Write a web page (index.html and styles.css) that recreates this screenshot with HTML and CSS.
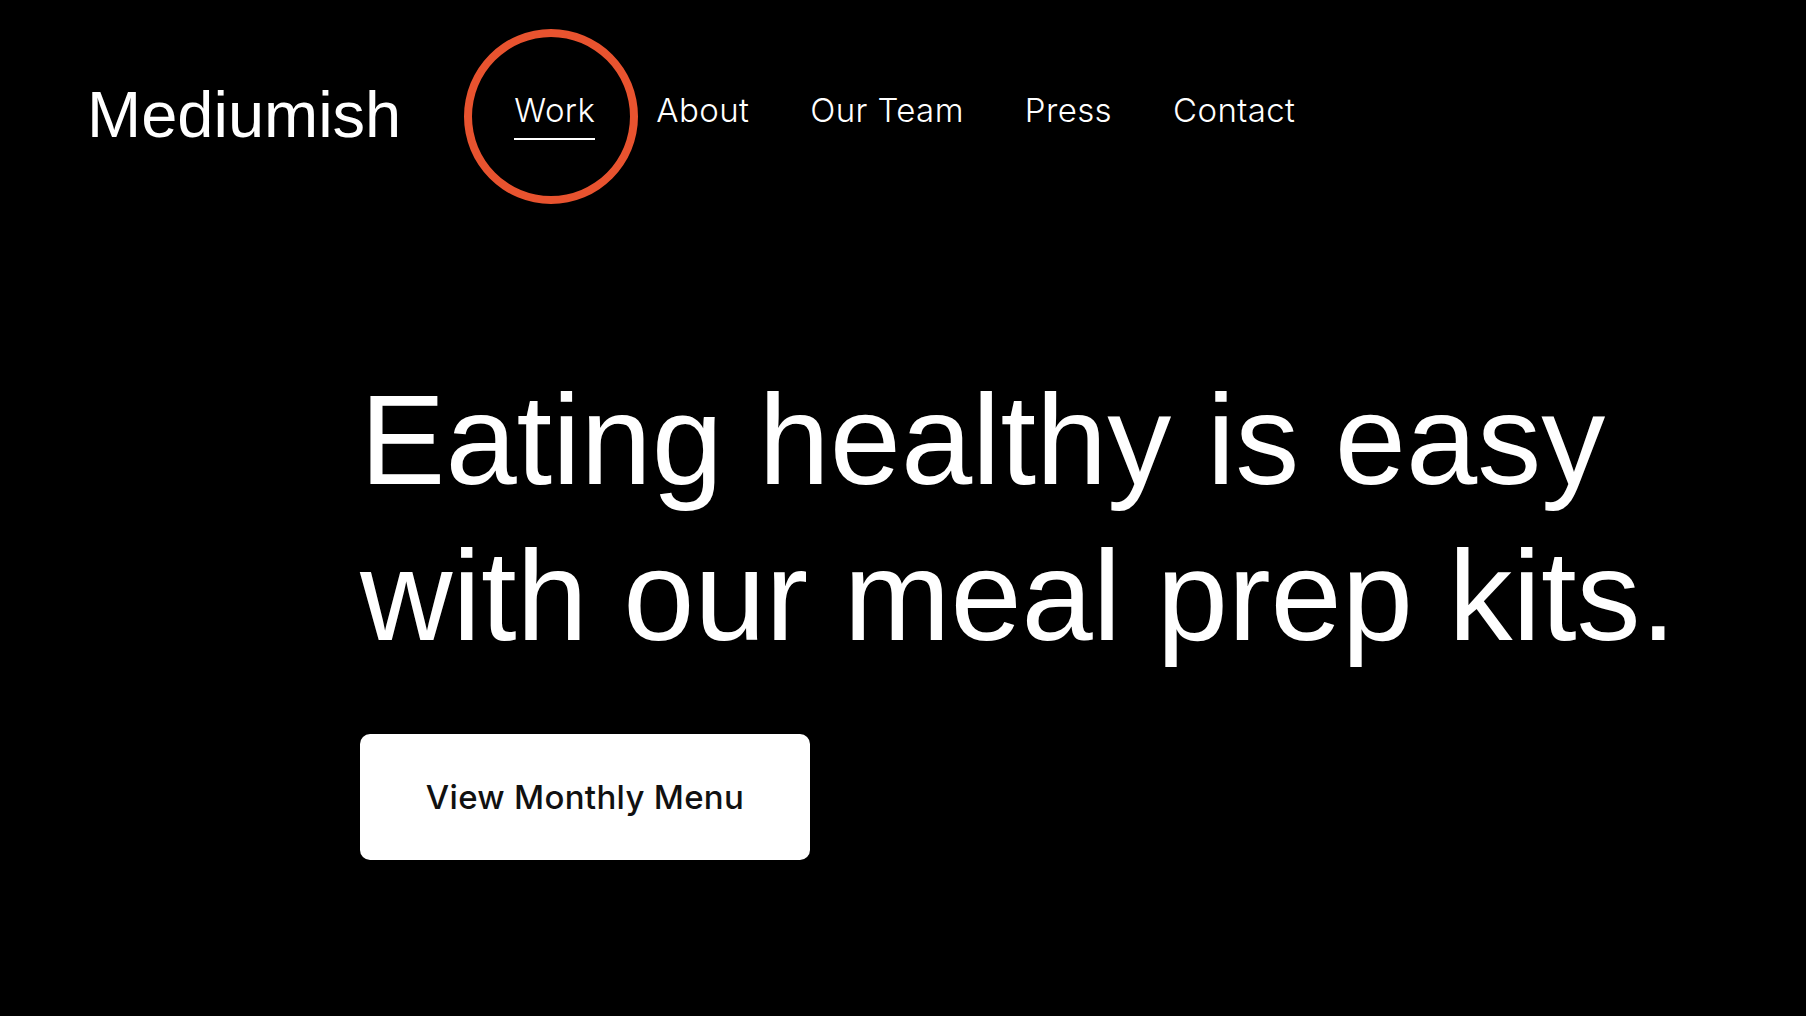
FILE: index.html
```html
<!DOCTYPE html>
<html lang="en">
<head>
    <meta charset="UTF-8">
    <meta name="viewport" content="width=device-width, initial-scale=1.0">
    <title>Mediumish</title>
    <link rel="stylesheet" href="styles.css">
</head>
<body>
    <header class="site-header">
        <a href="#" class="logo">Mediumish</a>
        <nav class="main-nav">
            <a href="#" class="nav-link active">Work<span class="highlight-ring"></span></a>
            <a href="#" class="nav-link">About</a>
            <a href="#" class="nav-link">Our Team</a>
            <a href="#" class="nav-link">Press</a>
            <a href="#" class="nav-link">Contact</a>
        </nav>
    </header>

    <section class="hero">
        <h1 class="hero-title">Eating healthy is easy<br>with our meal prep kits.</h1>
        <a href="#" class="menu-btn">View Monthly Menu</a>
    </section>
</body>
</html>
```

FILE: styles.css
```css
* {
    margin: 0;
    padding: 0;
    box-sizing: border-box;
}
body {
    background: #000;
    color: #fff;
    min-height: 100vh;
    font-family: 'Liberation Sans', Arial, sans-serif;
    overflow: hidden;
}
a {
    color: inherit;
    text-decoration: none;
}
.site-header {
    display: flex;
    align-items: center;
    padding: 82px 0 0 87px;
}
.logo {
    font-family: 'Liberation Sans', Arial, sans-serif;
    font-size: 65px;
    line-height: 65px;
    color: #fff;
    margin-right: 113px;
}
.main-nav {
    display: flex;
    align-items: center;
    gap: 61px;
}
.nav-link {
    font-family: 'Inter', sans-serif;
    font-weight: 300;
    font-size: 33px;
    line-height: 40px;
    letter-spacing: 0.4px;
    padding-bottom: 8px;
    border-bottom: 2px solid transparent;
    color: #fff;
}
.nav-link.active {
    position: relative;
    border-bottom-color: #fff;
}
/* red ring drawn around the active item */
.highlight-ring {
    position: absolute;
    left: 50%;
    top: 50%;
    width: 174px;
    height: 175px;
    margin: -85px 0 0 -91px;
    border: 8px solid #e8532f;
    border-radius: 50%;
    pointer-events: none;
}
.hero {
    padding: 215px 0 0 360px;
}
.hero-title {
    font-family: 'Liberation Sans', Arial, sans-serif;
    font-weight: 400;
    font-size: 128px;
    line-height: 156px;
    color: #fff;
}
.menu-btn {
    display: flex;
    align-items: center;
    justify-content: center;
    width: 450px;
    height: 126px;
    margin-top: 60px;
    background: #fff;
    border-radius: 10px;
    color: #111;
    font-family: 'Inter', sans-serif;
    font-weight: 500;
    font-size: 33px;
    letter-spacing: 0.3px;
}
```
